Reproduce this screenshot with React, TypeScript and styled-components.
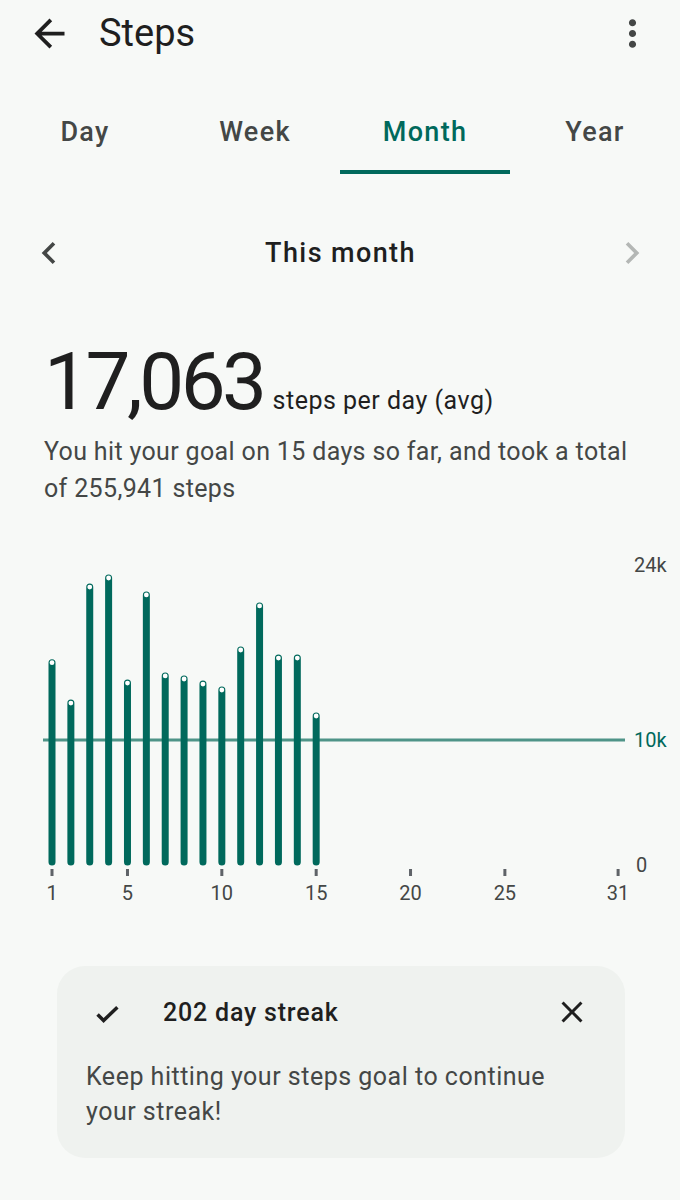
import styled, { createGlobalStyle } from "styled-components";

const GlobalStyle = createGlobalStyle`
  html, body {
    margin: 0;
    padding: 0;
    background: #f7f9f7;
  }
  body {
    font-family: Roboto, "Noto Sans", "Liberation Sans", sans-serif;
    color: #1f1f1f;
  }
`;

const TEAL = "#00695c";

const Page = styled.div`
  width: 680px;
  min-height: 1200px;
  display: flex;
  flex-direction: column;
`;

const TopBar = styled.header`
  height: 66px;
  display: flex;
  align-items: center;
  padding: 0 26px 0 27px;
`;

const IconBox = styled.span<{ size: number; color?: string }>`
  width: ${(p) => p.size}px;
  height: ${(p) => p.size}px;
  display: inline-flex;
  flex-shrink: 0;
  color: ${(p) => p.color ?? "#1f1f1f"};

  svg {
    width: 100%;
    height: 100%;
    fill: currentColor;
  }
`;

const Title = styled.h1`
  margin: 0 0 0 27px;
  font-size: 38px;
  font-weight: 400;
  letter-spacing: 0;
  flex: 1;
`;

const Tabs = styled.nav`
  margin-top: 24px;
  display: grid;
  grid-template-columns: repeat(4, 170px);
`;

const Tab = styled.button<{ active?: boolean }>`
  height: 84px;
  padding: 4px 0 0;
  border: none;
  border-bottom: 4px solid ${(p) => (p.active ? TEAL : "transparent")};
  background: none;
  font-family: inherit;
  font-size: 27px;
  font-weight: 500;
  letter-spacing: 1.3px;
  color: ${(p) => (p.active ? TEAL : "#444746")};
`;

const DateNav = styled.div`
  margin-top: 46px;
  height: 66px;
  display: flex;
  align-items: center;
  justify-content: space-between;
  padding: 0 26px 0 27px;
`;

const DateLabel = styled.span`
  font-size: 27px;
  font-weight: 500;
  letter-spacing: 1.4px;
  color: #1f1f1f;
`;

const Stats = styled.section`
  margin-top: 56px;
  padding: 0 44px;
`;

const AvgRow = styled.div`
  display: flex;
  align-items: baseline;
  gap: 9px;
`;

const BigNumber = styled.span`
  font-size: 80px;
  line-height: 1;
  font-weight: 400;
  letter-spacing: -3.5px;
  color: #1f1f1f;
`;

const Unit = styled.span`
  font-size: 25px;
  letter-spacing: 0.5px;
  color: #1f1f1f;
`;

const Summary = styled.p`
  margin: 11px 0 0;
  font-size: 25px;
  line-height: 37px;
  letter-spacing: 0.35px;
  color: #444746;
`;

const ChartSvg = styled.svg`
  display: block;
  margin-top: 33px;
  font-family: Roboto, "Noto Sans", sans-serif;
`;

const Card = styled.section`
  margin: 56px 55px 0 57px;
  border-radius: 28px;
  background: #eff2ef;
  padding: 22px 0 29px;
`;

const CardHeader = styled.div`
  height: 48px;
  display: flex;
  align-items: center;
  padding: 0 35px 0 35px;
`;

const CardTitle = styled.span`
  margin-left: 42px;
  flex: 1;
  font-size: 25px;
  font-weight: 500;
  letter-spacing: 0.8px;
  color: #1f1f1f;
`;

const CardBody = styled.p`
  margin: 23px 0 0;
  padding: 0 50px 0 29px;
  font-size: 25px;
  line-height: 35px;
  letter-spacing: 0.5px;
  color: #444746;
`;

const ArrowBack = () => (
  <svg viewBox="0 0 24 24">
    <path d="M20 11H7.83l5.59-5.59L12 4l-8 8 8 8 1.41-1.41L7.83 13H20v-2z" />
  </svg>
);

const MoreVert = () => (
  <svg viewBox="0 0 24 24">
    <path d="M12 8c1.1 0 2-.9 2-2s-.9-2-2-2-2 .9-2 2 .9 2 2 2zm0 2c-1.1 0-2 .9-2 2s.9 2 2 2 2-.9 2-2-.9-2-2-2zm0 6c-1.1 0-2 .9-2 2s.9 2 2 2 2-.9 2-2-.9-2-2-2z" />
  </svg>
);

const ChevronLeft = () => (
  <svg viewBox="0 0 24 24">
    <path d="M15.41 7.41L14 6l-6 6 6 6 1.41-1.41L10.83 12z" />
  </svg>
);

const ChevronRight = () => (
  <svg viewBox="0 0 24 24">
    <path d="M10 6L8.59 7.41 13.17 12l-4.58 4.59L10 18l6-6z" />
  </svg>
);

const Check = () => (
  <svg viewBox="0 0 24 24">
    <polyline
      points="4.6,13.6 9.6,18.6 21,7.6"
      fill="none"
      stroke="currentColor"
      strokeWidth={2.9}
    />
  </svg>
);

const Close = () => (
  <svg viewBox="0 0 24 24">
    <path d="M19 6.41L17.59 5 12 10.59 6.41 5 5 6.41 10.59 12 5 17.59 6.41 19 12 13.41 17.59 19 19 17.59 13.41 12z" />
  </svg>
);

const dailySteps = [
  16420, 13110, 22620, 23360, 14750, 21970, 15330, 15080, 14670, 14180, 17460,
  21070, 16800, 16800, 12050,
];

// chart geometry (svg coords)
const BASE_Y = 322;
const PX_PER_K = 12.2;
const DAY0_X = 52;
const DAY_STEP = 18.87;
const dayX = (d: number) => DAY0_X + (d - 1) * DAY_STEP;
const valueY = (v: number) => BASE_Y - (v / 1000) * PX_PER_K;

const tickDays = [1, 5, 10, 15, 20, 25, 31];

const StepsChart = () => (
  <ChartSvg width={680} height={370} viewBox="0 0 680 370">
    <line
      x1={43}
      x2={625}
      y1={valueY(10000)}
      y2={valueY(10000)}
      stroke="#4f9488"
      strokeWidth={3}
    />
    {dailySteps.map((v, i) => {
      const x = dayX(i + 1);
      const top = valueY(v);
      return (
        <g key={i}>
          <line
            x1={x}
            x2={x}
            y1={BASE_Y}
            y2={top + 1}
            stroke={TEAL}
            strokeWidth={7}
            strokeLinecap="round"
          />
          <circle cx={x} cy={top + 1} r={2.4} fill="#ffffff" />
        </g>
      );
    })}
    {tickDays.map((d) => (
      <g key={d}>
        <rect x={dayX(d) - 1.5} y={329} width={3} height={7} fill="#5f6368" />
        <text
          x={dayX(d)}
          y={360}
          textAnchor="middle"
          fontSize={20}
          fill="#444746"
        >
          {d}
        </text>
      </g>
    ))}
    <text x={634} y={32} fontSize={20} fill="#444746">
      24k
    </text>
    <text x={634} y={207} fontSize={20} fill={TEAL}>
      10k
    </text>
    <text x={636} y={332} fontSize={20} fill="#444746">
      0
    </text>
  </ChartSvg>
);

export default function App() {
  return (
    <Page>
      <GlobalStyle />
      <TopBar>
        <IconBox size={45}>
          <ArrowBack />
        </IconBox>
        <Title>Steps</Title>
        <IconBox size={43} color="#444746">
          <MoreVert />
        </IconBox>
      </TopBar>

      <Tabs>
        <Tab>Day</Tab>
        <Tab>Week</Tab>
        <Tab active>Month</Tab>
        <Tab>Year</Tab>
      </Tabs>

      <DateNav>
        <IconBox size={44} color="#444746">
          <ChevronLeft />
        </IconBox>
        <DateLabel>This month</DateLabel>
        <IconBox size={44} color="#b4b7b5">
          <ChevronRight />
        </IconBox>
      </DateNav>

      <Stats>
        <AvgRow>
          <BigNumber>17,063</BigNumber>
          <Unit>steps per day (avg)</Unit>
        </AvgRow>
        <Summary>
          You hit your goal on 15 days so far, and took a total of 255,941 steps
        </Summary>
      </Stats>

      <StepsChart />

      <Card>
        <CardHeader>
          <IconBox size={29}>
            <Check />
          </IconBox>
          <CardTitle>202 day streak</CardTitle>
          <IconBox size={36}>
            <Close />
          </IconBox>
        </CardHeader>
        <CardBody>
          Keep hitting your steps goal to continue your streak!
        </CardBody>
      </Card>
    </Page>
  );
}
